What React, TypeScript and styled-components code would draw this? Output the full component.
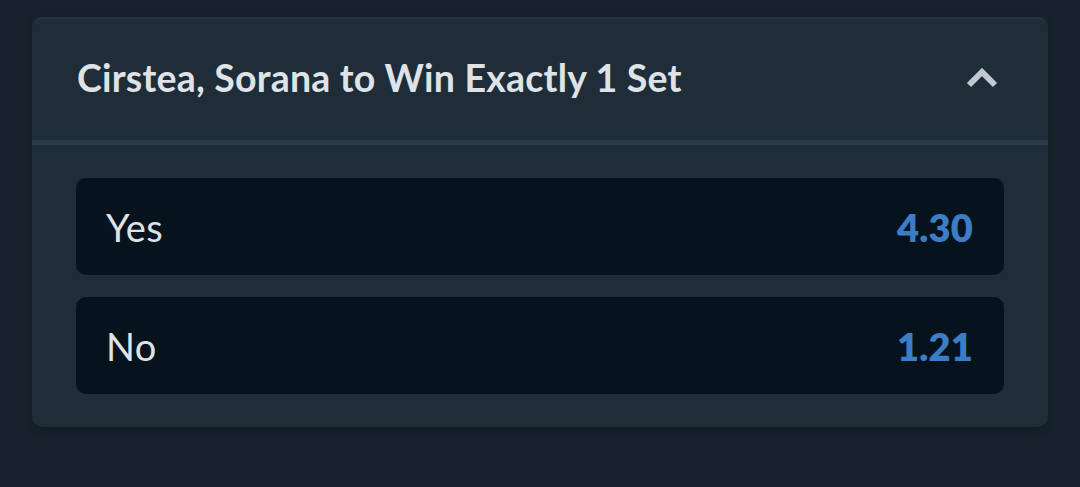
import React from 'react';
import styled, { createGlobalStyle } from 'styled-components';

const GlobalStyle = createGlobalStyle`
  html, body {
    margin: 0;
    padding: 0;
    background: #17222c;
  }
  body {
    font-family: Lato, "Noto Sans", sans-serif;
  }
`;

const Page = styled.div`
  height: 487px;
  padding: 17px 32px 0;
  box-sizing: border-box;
`;

const Card = styled.section`
  background: #1e2d38;
  border-radius: 10px;
  border-top: 2px solid #26353f;
  box-shadow: 0 3px 6px rgba(0, 0, 0, 0.25);
  overflow: hidden;
`;

const Header = styled.div`
  height: 117px;
  display: flex;
  align-items: center;
  justify-content: space-between;
  padding: 0 50px 4px 45px;
  border-bottom: 5px solid #2a3a46;
`;

const Title = styled.h2`
  margin: 0;
  font-size: 37.5px;
  font-weight: 700;
  color: #dfe2e7;
  letter-spacing: 0.2px;
`;

const Chevron = styled.svg`
  width: 32px;
  height: 21px;
  color: #c2c8d2;
`;

const Body = styled.div`
  display: flex;
  flex-direction: column;
  gap: 22px;
  padding: 33px 44px;
`;

const Row = styled.button`
  all: unset;
  height: 97px;
  display: flex;
  align-items: center;
  justify-content: space-between;
  padding: 0 31px 0 30px;
  background: #06131c;
  border-radius: 10px;
  cursor: pointer;
`;

const Label = styled.span`
  font-size: 38px;
  font-weight: 400;
  color: #dfe2e7;
  letter-spacing: 0.3px;
`;

const Odds = styled.span`
  font-size: 38px;
  font-weight: 800;
  color: #3c7ec5;
  letter-spacing: 0.2px;
`;

const outcomes = [
  { label: 'Yes', odds: '4.30' },
  { label: 'No', odds: '1.21' },
];

export default function App() {
  return (
    <>
      <GlobalStyle />
      <Page>
        <Card>
          <Header>
            <Title>Cirstea, Sorana to Win Exactly 1 Set</Title>
            <Chevron viewBox="0 0 32 21" fill="none">
              <path d="M3 18L16 5L29 18" stroke="currentColor" strokeWidth="6" />
            </Chevron>
          </Header>
          <Body>
            {outcomes.map((o) => (
              <Row key={o.label}>
                <Label>{o.label}</Label>
                <Odds>{o.odds}</Odds>
              </Row>
            ))}
          </Body>
        </Card>
      </Page>
    </>
  );
}
